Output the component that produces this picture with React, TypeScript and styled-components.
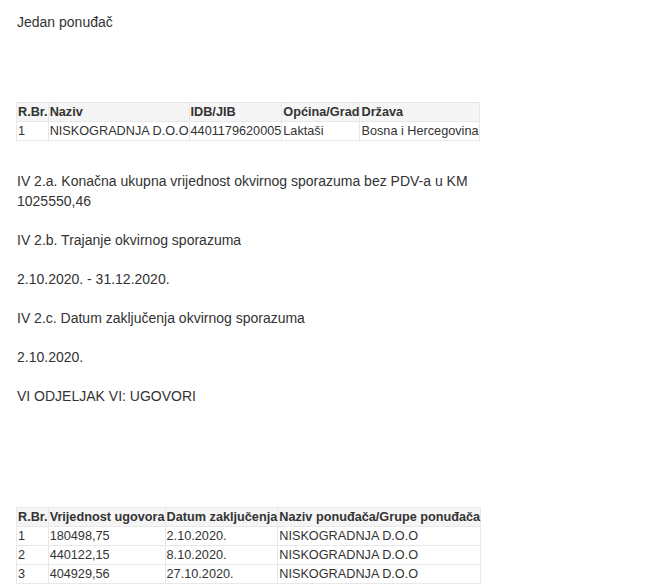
import React from 'react';
import styled, { createGlobalStyle } from 'styled-components';

const GlobalStyle = createGlobalStyle`
  body {
    margin: 0;
    background: #fff;
    color: #333;
    font-family: "Liberation Sans", Arial, sans-serif;
    font-size: 14px;
    line-height: 20px;
  }
`;

const Page = styled.div`
  padding: 12px 16px 0 17px;
`;

const Text = styled.p<{ $gap?: number }>`
  margin: 0 0 ${({ $gap }) => ($gap ?? 19)}px;
`;

const Table = styled.table<{ $gap?: number }>`
  border-collapse: collapse;
  font-size: 12.7px;
  line-height: 18px;
  margin: 0 0 ${({ $gap }) => ($gap ?? 19)}px -1px;
`;

const Th = styled.th`
  text-align: left;
  font-weight: bold;
  background: #f5f5f5;
  border: 1px solid #e8e8e8;
  padding: 0 0 0 1px;
  white-space: nowrap;
`;

const Td = styled.td`
  border: 1px solid #e8e8e8;
  padding: 0 0 0 1px;
  white-space: nowrap;
`;

const bidders = [
  ['1', 'NISKOGRADNJA D.O.O', '4401179620005', 'Laktaši', 'Bosna i Hercegovina'],
];

const contracts = [
  ['1', '180498,75', '2.10.2020.', 'NISKOGRADNJA D.O.O'],
  ['2', '440122,15', '8.10.2020.', 'NISKOGRADNJA D.O.O'],
  ['3', '404929,56', '27.10.2020.', 'NISKOGRADNJA D.O.O'],
];

const DataTable = ({ head, rows, gap }: { head: string[]; rows: string[][]; gap?: number }) => (
  <Table $gap={gap}>
    <thead>
      <tr>
        {head.map((h) => (
          <Th key={h}>{h}</Th>
        ))}
      </tr>
    </thead>
    <tbody>
      {rows.map((row) => (
        <tr key={row[0]}>
          {row.map((cell, i) => (
            <Td key={i}>{cell}</Td>
          ))}
        </tr>
      ))}
    </tbody>
  </Table>
);

const App = () => (
  <>
    <GlobalStyle />
    <Page>
      <Text $gap={70}>Jedan ponuđač</Text>
      <DataTable
        head={['R.Br.', 'Naziv', 'IDB/JIB', 'Općina/Grad', 'Država']}
        rows={bidders}
        gap={30}
      />
      <Text>
        IV 2.a. Konačna ukupna vrijednost okvirnog sporazuma bez PDV-a u KM
        <br />
        1025550,46
      </Text>
      <Text>IV 2.b. Trajanje okvirnog sporazuma</Text>
      <Text>2.10.2020. - 31.12.2020.</Text>
      <Text>IV 2.c. Datum zaključenja okvirnog sporazuma</Text>
      <Text>2.10.2020.</Text>
      <Text $gap={101}>VI ODJELJAK VI: UGOVORI</Text>
      <DataTable
        head={['R.Br.', 'Vrijednost ugovora', 'Datum zaključenja', 'Naziv ponuđača/Grupe ponuđača']}
        rows={contracts}
      />
    </Page>
  </>
);

export default App;
